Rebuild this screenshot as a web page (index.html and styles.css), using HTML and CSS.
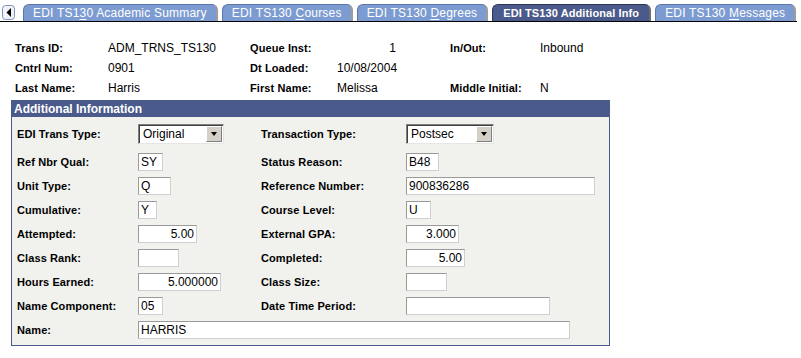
FILE: index.html
```html
<!DOCTYPE html>
<html lang="en">
<head>
    <meta charset="UTF-8">
    <title>EDI TS130 Additional Info</title>
    <link rel="stylesheet" href="styles.css">
</head>
<body>
    <div class="tabbar">
        <span class="scroll-btn">
            <svg width="13" height="15" viewBox="0 0 13 15">
                <rect x="0.5" y="0.5" width="12" height="14" rx="3" fill="#eef1f7" stroke="#7f93bb"/>
                <rect x="3" y="3" width="1" height="9" fill="#ffffff"/>
                <polygon points="9,3 9,12 4.5,7.5" fill="#000"/>
            </svg>
        </span>
        <div class="tabs">
            <a class="tab">EDI TS1<u>3</u>0 Academic Summary</a>
            <a class="tab">EDI TS130 <u>C</u>ourses</a>
            <a class="tab">EDI TS130 <u>D</u>egrees</a>
            <a class="tab active">EDI TS130 Additional Info</a>
            <a class="tab">EDI TS130 <u>M</u>essages</a>
        </div>
    </div>

    <div class="summary">
        <span class="lbl">Trans ID:</span>
        <span class="val">ADM_TRNS_TS130</span>
        <span class="lbl">Queue Inst:</span>
        <span class="val num">1</span>
        <span class="lbl">In/Out:</span>
        <span class="val">Inbound</span>

        <span class="lbl">Cntrl Num:</span>
        <span class="val">0901</span>
        <span class="lbl">Dt Loaded:</span>
        <span class="val">10/08/2004</span>
        <span></span>
        <span></span>

        <span class="lbl">Last Name:</span>
        <span class="val">Harris</span>
        <span class="lbl">First Name:</span>
        <span class="val">Melissa</span>
        <span class="lbl">Middle Initial:</span>
        <span class="val">N</span>
    </div>

    <section class="group">
        <h2 class="group-title">Additional Information</h2>
        <div class="fields">
            <label class="lbl first">EDI Trans Type:</label>
            <div class="select w86"><span class="select-text">Original</span><span class="select-btn"><i></i></span></div>
            <label class="lbl first">Transaction Type:</label>
            <div class="select w88"><span class="select-text">Postsec</span><span class="select-btn"><i></i></span></div>

            <label class="lbl">Ref Nbr Qual:</label>
            <div><input class="fld" style="width:25px" value="SY" readonly></div>
            <label class="lbl">Status Reason:</label>
            <div><input class="fld" style="width:33px" value="B48" readonly></div>

            <label class="lbl">Unit Type:</label>
            <div><input class="fld" style="width:33px" value="Q" readonly></div>
            <label class="lbl">Reference Number:</label>
            <div><input class="fld" style="width:189px" value="900836286" readonly></div>

            <label class="lbl">Cumulative:</label>
            <div><input class="fld" style="width:19px" value="Y" readonly></div>
            <label class="lbl">Course Level:</label>
            <div><input class="fld" style="width:25px" value="U" readonly></div>

            <label class="lbl">Attempted:</label>
            <div><input class="fld right" style="width:59px" value="5.00" readonly></div>
            <label class="lbl">External GPA:</label>
            <div><input class="fld right" style="width:53px" value="3.000" readonly></div>

            <label class="lbl">Class Rank:</label>
            <div><input class="fld" style="width:41px" value="" readonly></div>
            <label class="lbl">Completed:</label>
            <div><input class="fld right" style="width:59px" value="5.00" readonly></div>

            <label class="lbl">Hours Earned:</label>
            <div><input class="fld right" style="width:83px" value="5.000000" readonly></div>
            <label class="lbl">Class Size:</label>
            <div><input class="fld" style="width:41px" value="" readonly></div>

            <label class="lbl">Name Component:</label>
            <div><input class="fld" style="width:25px" value="05" readonly></div>
            <label class="lbl">Date Time Period:</label>
            <div><input class="fld" style="width:144px" value="" readonly></div>

            <label class="lbl">Name:</label>
            <div class="span3"><input class="fld" style="width:432px" value="HARRIS" readonly></div>
        </div>
    </section>
</body>
</html>
```

FILE: styles.css
```css
body {
    margin: 0;
    background: #fff;
    color: #000;
    font-family: "Liberation Sans", Arial, sans-serif;
    font-size: 12px;
}

/* tab strip */
.tabbar {
    display: flex;
    align-items: flex-end;
    width: 797px;
    height: 21px;
    border-bottom: 1px solid #000;
}

.scroll-btn {
    display: block;
    align-self: flex-start;
    margin: 5px 0 0 2px;
    height: 15px;
}

.scroll-btn svg {
    display: block;
}

.tabs {
    display: flex;
    gap: 4px;
    margin-left: 8px;
}

.tab {
    display: block;
    height: 17px;
    box-sizing: border-box;
    padding: 1px 9px 0 9px;
    background: #7c9cd1;
    color: #fff;
    font-size: 12px;
    line-height: 15px;
    letter-spacing: 0.2px;
    border: 1px solid #5d75a8;
    border-right: 2px solid #9c9c9c;
    border-bottom: none;
    border-radius: 6px 6px 0 0;
    white-space: nowrap;
}

.tab u {
    text-decoration-thickness: 1px;
    text-underline-offset: 2px;
}

.tab.active {
    background: #4a5a8a;
    border-color: #2a3458;
    border-right-color: #6b6b6b;
    font-weight: bold;
    font-size: 11px;
    letter-spacing: 0.1px;
    padding: 1px 10px 0 10px;
}

/* summary block */
.summary {
    display: grid;
    grid-template-columns: 93px 142px 87px 113px 90px auto;
    grid-auto-rows: 20px;
    margin-top: 16px;
    padding-left: 15px;
    line-height: 20px;
}

.lbl {
    font-size: 11px;
    font-weight: bold;
    letter-spacing: 0.1px;
    white-space: nowrap;
}

.val {
    font-size: 12px;
}

.val.num {
    width: 59px;
    text-align: right;
}

/* group box */
.group {
    box-sizing: border-box;
    width: 599px;
    margin: 2px 0 0 11px;
    background: #f1f2ee;
    border: 1px solid #4a5a8a;
}

.group-title {
    margin: 0;
    height: 16px;
    padding-left: 2px;
    background: #4a5a8a;
    color: #fff;
    font-size: 12px;
    font-weight: bold;
    line-height: 16px;
}

.fields {
    display: grid;
    grid-template-columns: 121px 123px 145px 1fr;
    grid-template-rows: 23px repeat(8, 18px);
    row-gap: 6px;
    padding: 7px 0 6px 5px;
}

.fields > * {
    align-self: start;
}

.fields .lbl {
    line-height: 18px;
}

.fields .lbl.first {
    line-height: 20px;
}

.span3 {
    grid-column: span 3;
}

.fld {
    display: block;
    box-sizing: border-box;
    height: 18px;
    margin: 0;
    padding: 0 2px;
    background: #fff;
    border: 1px solid;
    border-color: #9a9a9a #cfcfcf #cfcfcf #9a9a9a;
    font-family: "Liberation Sans", Arial, sans-serif;
    font-size: 12px;
    color: #000;
    outline: none;
}

.fld.right {
    text-align: right;
}

/* drop-down */
.select {
    display: flex;
    align-items: center;
    box-sizing: border-box;
    height: 20px;
    background: #fff;
    border: 1px solid;
    border-color: #808080 #e6e6e6 #e6e6e6 #808080;
    box-shadow: inset 1px 1px 0 #404040;
}

.w86 { width: 86px; }
.w88 { width: 88px; }

.select-text {
    flex: 1;
    padding-left: 4px;
    font-size: 12px;
}

.select-btn {
    display: flex;
    align-items: center;
    justify-content: center;
    box-sizing: border-box;
    width: 16px;
    height: 16px;
    margin-right: 1px;
    background: #d4d0c8;
    border: 1px solid;
    border-color: #fff #808080 #808080 #fff;
}

.select-btn i {
    display: block;
    width: 0;
    height: 0;
    border-left: 3px solid transparent;
    border-right: 3px solid transparent;
    border-top: 4px solid #000;
}
```
